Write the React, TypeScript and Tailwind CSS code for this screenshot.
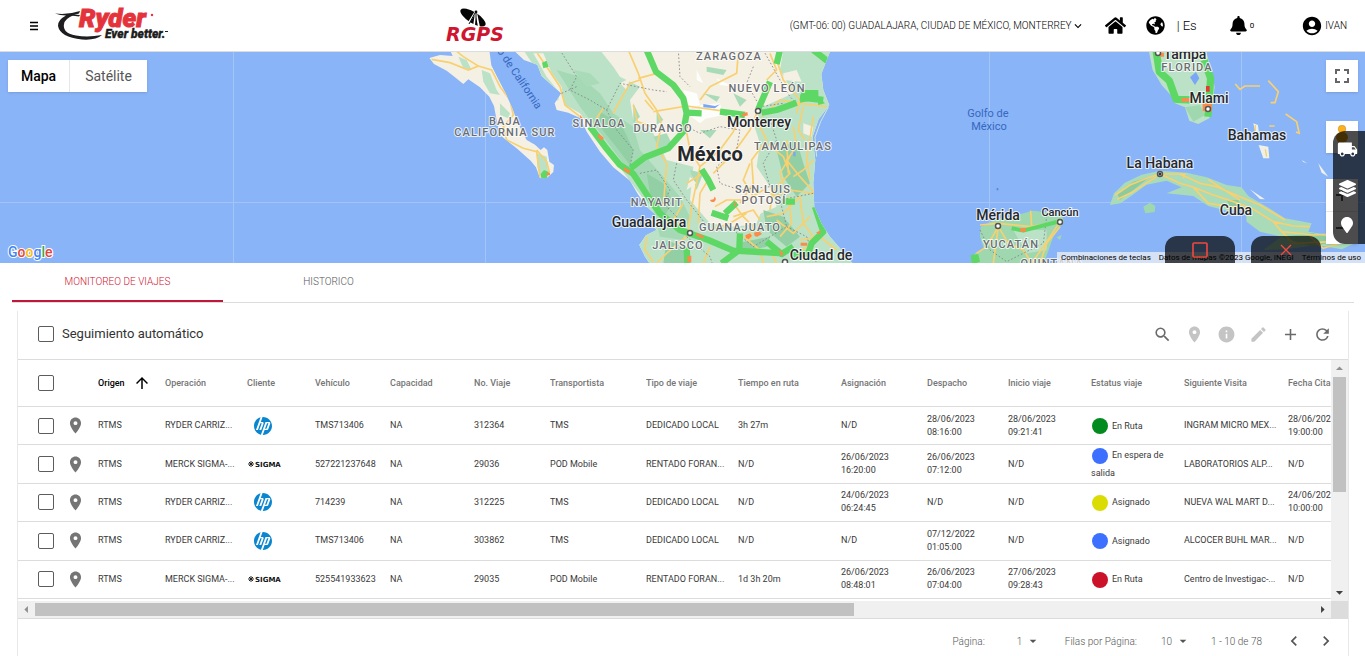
import { useState } from "react";
import { FaBell, FaGlobeAmericas, FaHome, FaLayerGroup, FaMapMarker } from "react-icons/fa";
import {
  MdAccountCircle,
  MdAdd,
  MdArrowDropDown,
  MdArrowUpward,
  MdChevronLeft,
  MdChevronRight,
  MdEdit,
  MdFullscreen,
  MdInfo,
  MdKeyboardArrowDown,
  MdLocalShipping,
  MdPlace,
  MdRefresh,
  MdSearch,
} from "react-icons/md";
import { SiHp } from "react-icons/si";

type Trip = {
  id: number;
  operation: string;
  client: "hp" | "sigma";
  vehicle: string;
  trip: string;
  carrier: string;
  kind: string;
  time: string;
  assigned: string;
  dispatched: string;
  started: string;
  status: string;
  dot: string;
  next: string;
  due: string;
};

const TRIPS: Trip[] = [
  {
    id: 1,
    operation: "RYDER CARRIZ...",
    client: "hp",
    vehicle: "TMS713406",
    trip: "312364",
    carrier: "TMS",
    kind: "DEDICADO LOCAL",
    time: "3h 27m",
    assigned: "N/D",
    dispatched: "28/06/2023 08:16:00",
    started: "28/06/2023 09:21:41",
    status: "En Ruta",
    dot: "bg-[#048b1f]",
    next: "INGRAM MICRO MEX...",
    due: "28/06/2023 19:00:00",
  },
  {
    id: 2,
    operation: "MERCK SIGMA-...",
    client: "sigma",
    vehicle: "527221237648",
    trip: "29036",
    carrier: "POD Mobile",
    kind: "RENTADO FORAN...",
    time: "N/D",
    assigned: "26/06/2023 16:20:00",
    dispatched: "26/06/2023 07:12:00",
    started: "N/D",
    status: "En espera de salida",
    dot: "bg-[#3d70ff]",
    next: "LABORATORIOS ALP...",
    due: "N/D",
  },
  {
    id: 3,
    operation: "RYDER CARRIZ...",
    client: "hp",
    vehicle: "714239",
    trip: "312225",
    carrier: "TMS",
    kind: "DEDICADO LOCAL",
    time: "N/D",
    assigned: "24/06/2023 06:24:45",
    dispatched: "N/D",
    started: "N/D",
    status: "Asignado",
    dot: "bg-[#dbdc04]",
    next: "NUEVA WAL MART D...",
    due: "24/06/2023 10:00:00",
  },
  {
    id: 4,
    operation: "RYDER CARRIZ...",
    client: "hp",
    vehicle: "TMS713406",
    trip: "303862",
    carrier: "TMS",
    kind: "DEDICADO LOCAL",
    time: "N/D",
    assigned: "N/D",
    dispatched: "07/12/2022 01:05:00",
    started: "N/D",
    status: "Asignado",
    dot: "bg-[#3d70ff]",
    next: "ALCOCER BUHL MAR...",
    due: "N/D",
  },
  {
    id: 5,
    operation: "MERCK SIGMA-...",
    client: "sigma",
    vehicle: "525541933623",
    trip: "29035",
    carrier: "POD Mobile",
    kind: "RENTADO FORAN...",
    time: "1d 3h 20m",
    assigned: "26/06/2023 08:48:01",
    dispatched: "26/06/2023 07:04:00",
    started: "27/06/2023 09:28:43",
    status: "En Ruta",
    dot: "bg-[#cc1229]",
    next: "Centro de Investigac-...",
    due: "N/D",
  },
];

const COLUMNS = [
  { label: "Operación", width: "w-[82px]" },
  { label: "Cliente", width: "w-[68px]" },
  { label: "Vehículo", width: "w-[75px]" },
  { label: "Capacidad", width: "w-[84px]" },
  { label: "No. Viaje", width: "w-[76px]" },
  { label: "Transportista", width: "w-[96px]" },
  { label: "Tipo de viaje", width: "w-[92px]" },
  { label: "Tiempo en ruta", width: "w-[103px]" },
  { label: "Asignación", width: "w-[86px]" },
  { label: "Despacho", width: "w-[81px]" },
  { label: "Inicio viaje", width: "w-[83px]" },
  { label: "Estatus viaje", width: "w-[93px]" },
  { label: "Siguiente Visita", width: "w-[104px]" },
  { label: "Fecha Cita", width: "w-[80px]" },
];

const REGIONS: [string, number, number][] = [
  ["ZARAGOZA", 729, 60],
  ["NUEVO LEÓN", 767, 92],
  ["SINALOA", 599, 127],
  ["DURANGO", 663, 132],
  ["TAMAULIPAS", 793, 150],
  ["BAJA", 505, 125],
  ["CALIFORNIA SUR", 505, 136],
  ["SAN LUIS", 763, 193],
  ["POTOSÍ", 764, 204],
  ["NAYARIT", 657, 206],
  ["GUANAJUATO", 740, 231],
  ["JALISCO", 678, 249],
  ["FLORIDA", 1187, 71],
  ["YUCATÁN", 1011, 248],
  ["QUINTANA", 1052, 267],
];

const CITIES: [string, number, number][] = [
  ["Monterrey", 759, 127],
  ["Guadalajara", 649, 227],
  ["Ciudad de", 821, 260],
  ["Tampa", 1185, 59],
  ["Miami", 1209, 103],
  ["Bahamas", 1257, 140],
  ["La Habana", 1160, 168],
  ["Cuba", 1236, 215],
  ["Mérida", 998, 220],
];

const MARKERS: [number, number][] = [
  [758, 111],
  [690, 233],
  [785, 262],
  [1158, 53],
  [1208, 109],
  [1160, 174],
  [998, 226],
  [1060, 222],
];

function RyderLogo() {
  return (
    <svg width="116" height="34" viewBox="0 0 116 34" className="overflow-visible" role="img" aria-label="Ryder Ever better.">
      <path
        d="M0 4.500 Q13 6 25 2 L24 4.500 Q13 7 9.500 13 Q6 24 21 26.500 Q33 28.500 47 26 Q41 31.500 27 30.500 Q5 28 3 17 Q2.500 11 11 6.500 Q5 6.500 0 4.500Z"
        fill="#1e1e20"
      />
      <path d="M9 5 L25 6 L24 7.500 Q16 6.500 9 5Z" fill="#1e1e20" />
      <g fontFamily="Roboto, 'Liberation Sans', sans-serif" fontStyle="italic">
        <text x="24" y="18" fontSize="26" fontWeight="900" fill="#e5333b" stroke="#e5333b" strokeWidth=".9">
          Ryder
        </text>
        <text x="50" y="29" fontSize="12" fontWeight="900" fill="#1e1e20" stroke="#1e1e20" strokeWidth=".3">
          Ever better.
        </text>
      </g>
      <circle cx="97" cy="6" r="1.2" fill="#e5333b" />
      <path d="M110 22.500h3" stroke="#1e1e20" />
    </svg>
  );
}

function RgpsLogo() {
  return (
    <svg width="60" height="36" viewBox="0 0 60 36" className="overflow-visible" role="img" aria-label="RGPS">
      <ellipse cx="28" cy="9.500" rx="14.500" ry="5.500" transform="rotate(32 28 9.500)" fill="#050505" />
      <path d="M31 3L21 19M31 4L29 18M31 4L34 19" stroke="#fff" strokeWidth="1.8" />
      <path d="M30 5L24 16M31 5L31 16" stroke="#050505" strokeWidth="1" />
      <circle cx="31" cy="4" r="1.4" fill="#050505" />
      <text x="1" y="33" fontSize="19" fontWeight="700" fontStyle="italic" fontFamily="'DejaVu Sans', sans-serif" fill="#cf1630">
        RGPS
      </text>
    </svg>
  );
}

function SigmaLogo() {
  return (
    <svg width="33" height="8" viewBox="0 0 33 8" className="overflow-visible" role="img" aria-label="Sigma">
      <path d="M1 4h6M4 1v6M2 2l4 4M6 2l-4 4" stroke="#222" strokeWidth="1" />
      <text x="8" y="7" fontSize="7" fontWeight="700" fontFamily="'DejaVu Sans', sans-serif" fill="#111">
        SIGMA
      </text>
    </svg>
  );
}

function GulfMap() {
  return (
    <svg
      viewBox="0 52 1365 211"
      preserveAspectRatio="xMidYMid slice"
      className="block h-[211px] w-full bg-[#8ab4f8]"
      fontFamily="Roboto, 'Liberation Sans', sans-serif"
    >
      <g stroke="#a3c3f9" fill="none">
        <path d="M233.5 52v211M485.5 52v211M989.5 52v211M1241.5 52v211M0 202.5h1365" />
      </g>

      {/* Mexico and Baja California, drawn at three units per pixel */}
      <g transform="translate(400 50) scale(.3333)">
        <clipPath id="mainland">
          <path d="M340 0 L372 30 L412 44 L425 78 L455 105 L484 130 L464 160 L470 180 L505 188 L542 205 L560 245 L600 305 L640 352 L690 392 L712 430 L738 468 L768 495 L745 512 L770 540 L738 556 L718 585 L735 620 L752 645 L1362 645 L1325 600 L1290 560 L1264 520 L1243 470 L1240 400 L1246 330 L1238 260 L1256 208 L1288 166 L1270 120 L1264 72 L1292 0Z" />
        </clipPath>
        <g clipPath="url(#mainland)">
          <path d="M330 0H1400V650H330Z" fill="#f4f0e4" />
          <path d="M370 0 L600 0 L640 50 L660 80 L720 110 L690 150 L700 210 L760 250 L800 330 L880 350 L870 450 L930 520 L1000 530 L1060 500 L1130 470 L1110 410 L1070 350 L1080 280 L1060 220 L1090 170 L1180 130 L1140 60 L1150 0 L1300 0 L1300 280 L1250 330 L1260 480 L1380 650 L700 650 L740 460 L620 300 L540 190 L470 150Z" fill="#bbe2c6" />
          <path d="M470 60 L540 80 L600 130 L640 190 L700 230 L720 300 L790 380 L840 440 L870 500 L850 570 L780 560 L760 480 L700 380 L610 260 L540 170Z" fill="#a5d9b5" />
          <path d="M600 185 L665 225 L700 300 L690 345 L640 280 L600 230Z M740 370 L790 400 L820 460 L790 500 L750 430Z M1130 300 L1190 270 L1210 340 L1230 400 L1190 440 L1150 380Z M1090 480 L1150 500 L1200 560 L1160 590 L1100 540Z M800 570 L850 590 L860 640 L790 640Z M1010 580 L1110 560 L1100 590 L1030 605Z" fill="#93cfa5" />
          <path d="M520 60 L560 110 L600 100 L570 70Z M760 260 L800 250 L820 290 L780 300Z M870 360 L910 370 L890 420Z M1000 130 L1040 150 L1020 170Z M920 50 L980 60 L970 75 L920 65Z M910 130 L960 140 L950 155Z M900 240 L950 240 L930 265Z M700 160 L720 200 L700 220Z M770 180 L790 210 L770 225Z" fill="#a9dbb9" />
          <path d="M1150 70 L1190 60 L1205 95 L1150 90Z M1210 220 L1240 230 L1235 260 L1210 250Z M660 100 L690 85 L680 120Z M1040 480 L1090 470 L1070 520 L1010 530 L980 500Z M870 380 L890 400 L860 420Z M400 10 L430 10 L455 70 L485 110 L495 180 L470 170 L480 130 L440 80Z" fill="#f4f0e4" />
          <path d="M850 120 L890 130 L900 165 L870 175Z M900 165 L960 160 L970 195 L900 210Z M890 60 L910 100 L890 90Z M950 85 L1000 110 L960 105Z M860 190 L930 195 L900 220Z" fill="#fdfdfb" />

          <g fill="none" stroke="#f8d070" strokeWidth="5" strokeLinejoin="round">
            <path d="M412 10 L440 50 L480 110 L495 165 L540 200" />
            <path d="M685 0 L715 70 L735 130 L770 180 L785 225 L770 290 L800 340 L790 470" />
            <path d="M720 90 L690 100 L650 170 L640 190 M715 85 L770 70 M760 185 L860 168 L1020 190 M700 165 L712 215 L755 230" />
            <path d="M855 220 L870 300 L900 350 L875 470 L865 540 M900 350 L960 300 L1000 245 L1020 195 M910 370 L860 400 M930 380 L900 430 L895 520 M940 370 L1000 310 L1050 240 L1070 190" />
            <path d="M1015 10 L1010 70 L930 110 L900 150 M1130 30 L1150 90 L1200 150 L1190 190 M1100 90 L1130 60 L1110 10 M1085 200 L1140 150 L1200 160 L1280 170" />
            <path d="M1070 210 L1100 270 L1055 330 L1060 400 L1020 460 M1050 340 L1030 390 L1060 440 M1180 230 L1190 290 L1160 330 L1200 380 L1245 430" />
            <path d="M1210 170 L1195 240 L1215 270 M1240 200 L1220 330 L1230 390 M1100 280 L1150 320 L1170 370 L1120 420 L1110 480 M1170 320 L1140 370 L1150 400 M1180 380 L1210 360 L1240 330 M1160 270 L1165 370" />
            <path d="M945 470 L980 450 L1040 450 L1090 420 L1130 440 M1000 460 L1030 500 L1060 530 L1050 570 M1120 440 L1170 420 L1240 430 M1100 500 L1150 490 L1200 440 L1210 520 L1240 560 M1130 510 L1180 550 L1230 500 M1165 440 L1175 520 L1140 560" />
            <path d="M870 550 L820 510 L850 460 M870 550 L800 610 L770 640 M740 560 L735 600 L760 635 M930 540 L990 520 L1040 490 M930 590 L910 640 M1030 560 L1080 600 L1090 640 M1200 570 L1260 560 L1310 600 M1110 600 L1130 640 M1220 590 L1180 620 M735 150 L760 180 M1000 500 L1060 480 L1080 510 M610 175 L590 205" />
          </g>

          <g fill="none" stroke="#827f85" strokeWidth="2.5" strokeDasharray="5 6">
            <path d="M480 0 L530 80 L510 120 L570 150 L620 180 L650 240 L700 300 L690 350" />
            <path d="M485 130 L530 110 M620 180 L660 100 L760 120 L800 125 M835 0 L840 80 L870 110" />
            <path d="M860 230 L900 250 L960 230 L1020 240 L1010 300 L950 350 L960 400 L1020 420 L1110 410 L1090 340 L1130 270 L1110 210" />
            <path d="M1060 50 L1040 100 L1080 170 L1150 160 M1090 0 L1140 90 L1170 140 L1190 160" />
            <path d="M830 340 L820 390 L860 450 L900 500 L930 540 M720 370 L770 360 L810 420 L790 460 L840 510" />
            <path d="M860 560 L930 620 L940 650 M1000 540 L1060 590 L1160 530 L1140 450 L1240 430 M1160 530 L1220 560 L1250 640" />
          </g>

          <g fill="none" stroke="#5dd865" strokeWidth="19" strokeLinejoin="round">
            <path d="M740 0 L768 65 L820 105 L850 145 L860 190 L850 245 L805 295 L735 322 L692 355" />
            <path d="M570 230 L615 290 L660 345 L700 372 L745 440 L780 490 L840 540 L925 570 L1000 602 L1150 610" />
            <path d="M860 188 L905 190 M960 185 L1035 195 M1075 178 L1110 95 M1085 188 L1130 180 L1190 158 M1200 142 L1270 150 M1140 0 L1130 42" />
            <path d="M905 358 L925 390 L940 420 M975 490 L1010 458 M935 488 L985 505 M1020 550 L1018 600 L965 640 M1245 470 L1270 545 L1235 580 L1225 610 L1180 615 M1100 575 L1145 612 L1180 590" />
            <path d="M1240 0 L1285 35 M1145 455 L1185 455 M860 590 L862 640" />
          </g>
          <path d="M1205 120 L1255 120 L1256 148 L1200 158Z M1250 135 L1275 160 L1255 165Z M426 38 L440 32 L446 50 L430 55Z" fill="#5dd865" />
          <g fill="#fb8b4a">
            <path d="M597 252 L612 264 L604 272 L592 258Z M540 195 L549 205 L541 212Z M674 352 L692 364 L686 371 L670 360Z M890 548 L912 558 L908 566 L888 556Z M1025 192 L1042 186 L1044 196 L1028 200Z M1137 598 L1152 612 L1142 618Z M862 617h12v20h-12Z M1202 578h20v9h-20Z M930 450 a9 9 0 1 0 14-10 l-3 8Z M1036 556 l14-6 6 8-10 10-8-4Z M1062 548 l16-4 8 8-14 8-8-2Z M1000 462 L1012 455 L1004 470Z M1248 548 l14-7-2 12Z" />
          </g>
          <path d="M910 162 L945 168 L960 163 L945 175 L910 172Z M1180 305h7v14h-7Z" fill="#79a6f6" />
        </g>

        <clipPath id="baja">
          <path d="M150 0 L158 18 L120 15 L88 24 L102 42 L140 62 L165 82 L190 102 L205 88 L240 112 L268 140 L282 168 L288 200 L300 255 L350 295 L392 332 L408 352 L420 385 L440 385 L460 366 L462 345 L448 335 L442 300 L432 292 L422 300 L405 284 L380 270 L352 215 L338 178 L318 132 L292 82 L274 46 L268 0Z" />
        </clipPath>
        <g clipPath="url(#baja)">
          <path d="M80 0H470V400H80Z" fill="#f4f0e4" />
          <path d="M175 20 L200 30 L215 60 L190 55Z M245 60 L270 70 L290 120 L300 135 L270 130 L250 95Z M300 160 L330 190 L325 205 L300 195Z M410 310 L440 320 L445 375 L425 390 L412 350Z" fill="#bbe2c6" />
          <path d="M95 28 L150 38 L205 60 L235 48 L190 20 L165 0 M235 48 L275 60 L300 110 L330 150 L340 195 L310 230 L320 270 L370 295 L410 305 L420 385 M410 300 L440 335 L448 365 L430 385" fill="none" stroke="#f8d070" strokeWidth="5" />
          <path d="M422 372 L432 360 L446 366 L440 386 L425 388Z" fill="#5dd865" />
          <path d="M440 368h10v8h-10Z" fill="#fb8b4a" />
        </g>
        <path d="M1285 172 L1262 215 L1245 262 L1250 320" fill="none" stroke="#cfe8d5" strokeWidth="3" />
      </g>

      {/* Yucatán, Cuba, Florida and the Bahamas */}
      <g transform="translate(880 50) scale(.3333)" strokeLinejoin="round">
        <path d="M270 645 L285 610 L312 596 L300 560 L302 530 L350 508 L400 498 L460 482 L545 492 L552 515 L520 560 L506 600 L490 645Z" fill="#9fd8af" />
        <path d="M400 540 L500 540 L500 600 L440 610Z" fill="#bbe2c6" />
        <path d="M690 465 L702 430 L735 398 L785 374 L840 362 L920 368 L980 382 L1040 405 L1085 412 L1105 438 L1160 470 L1215 505 L1295 520 L1285 545 L1345 555 L1415 550 L1435 575 L1385 598 L1310 585 L1220 598 L1150 600 L1205 560 L1140 545 L1100 515 L1098 480 L1040 482 L985 468 L940 438 L860 430 L905 412 L860 392 L800 404 L750 440 L722 460Z" fill="#a9dbb9" />
        <path d="M712 430 L760 395 L810 380 L760 420 L720 450Z M1200 560 L1300 550 L1380 570 L1300 590Z M1040 450 L1075 450 L1085 472 L1050 470Z" fill="#8ccb9f" />
        <path d="M790 470 L810 458 L826 468 L824 486 L796 490Z M530 562 L545 555 L540 570Z" fill="#9fd8af" />
        <path d="M806 0 L818 60 L845 105 L872 135 L885 160 L915 172 L928 212 L955 222 L988 205 L998 160 L1004 110 L998 80 L978 0Z" fill="#bbe2c6" />
        <path d="M915 172 L960 165 L975 195 L940 215Z" fill="#9fd8af" />
        <path d="M930 82 L948 66 L958 85 L945 105Z" fill="#79a6f6" />

        <g fill="none" stroke="#f8d070" strokeWidth="5">
          <path d="M300 525 L355 520 L450 530 L540 515 L490 590 L455 640 M355 530 L320 590 L290 610 M355 530 L385 580 L430 600 L455 640 M452 482 L455 530 M355 530 L340 640 M540 530 L500 580 L480 640" />
          <path d="M706 435 L750 405 L800 385 L840 372 L900 400 L940 412 L1000 435 L1060 455 L1120 478 L1180 515 L1240 528 L1290 530 M712 448 L760 425 L830 380 M900 372 L960 400 L1010 410 L1080 440 L1140 465 L1215 510 M840 372 L915 372 L910 385 M940 412 L985 460 L1050 470 L1110 478 M985 388 L1040 425 L1080 450 M1180 515 L1205 545 L1300 555 L1400 550 M1205 545 L1240 580 L1360 575 M1290 560 L1330 595 L1380 580" />
          <path d="M1066 102 L1080 118 L1095 108 L1140 108 M1165 92 L1195 125 L1185 158 L1172 158 M1217 192 L1250 215 L1258 250 L1248 246 M1168 228h16" />
        </g>
        <path d="M1120 220 L1134 225 L1138 258 L1126 245Z M1136 285 L1165 290 L1168 325 L1150 325Z M1265 330 L1282 340 L1270 336Z M1315 340 L1345 380 L1325 368Z M1110 418 L1155 448 L1140 447Z" fill="#edf1e8" />
        <path d="M1126 225v20M1156 298 L1160 320" stroke="#f8d070" strokeWidth="4" />
        <path d="M300 540 L330 600 L380 635 L490 580 L500 500" fill="none" stroke="#827f85" strokeWidth="2.5" strokeDasharray="5 6" />

        <g fill="none" stroke="#5dd865" strokeWidth="22">
          <path d="M828 0 L838 65 L868 92 L888 148 L940 150" />
          <path d="M972 30 L992 85 L984 200" />
        </g>
        <path d="M395 535 L430 542 L530 516" fill="none" stroke="#5dd865" strokeWidth="12" />
        <path d="M272 615 L295 612 L300 635 L275 645Z" fill="#5dd865" />
        <path d="M905 144h30v11h-30Z M968 160h28v24h-28Z M420 535h18v10h-18Z M840 8h12v12h-12Z" fill="#fb8b4a" />
        <path d="M978 108h11v17h-11Z" fill="#e53935" />
        <path d="M350 414h5v7h-5Z" fill="#5d87cf" />
      </g>

      <g fill="#fff" stroke="#555" strokeWidth="1.5">
        {MARKERS.map(([x, y]) => (
          <circle key={`${x}-${y}`} cx={x} cy={y} r="2.5" />
        ))}
      </g>
      <circle cx="1160" cy="174" r="1.5" fill="#333" />

      <g textAnchor="middle" paintOrder="stroke" stroke="#fff" strokeWidth="2" strokeLinejoin="round" strokeOpacity=".8">
        <g fontSize="11" fontWeight="500" fill="#6a6d70" className="tracking-widest">
          {REGIONS.map(([name, x, y]) => (
            <text key={name} x={x} y={y}>
              {name}
            </text>
          ))}
        </g>
        <g fontSize="14" fontWeight="500" fill="#26282c">
          {CITIES.map(([name, x, y]) => (
            <text key={name} x={x} y={y}>
              {name}
            </text>
          ))}
          <text x="1060" y="216" fontSize="11">Cancún</text>
          <text x="710" y="161" fontSize="20" fontWeight="700">México</text>
        </g>
      </g>
      <g textAnchor="middle" fontSize="11" fill="#3568be">
        <text x="988" y="117">Golfo de</text>
        <text x="989" y="130">México</text>
        <text transform="translate(511 72) rotate(56)">Golfo de California</text>
      </g>
      <text x="8" y="257" fontSize="14" fontWeight="500" paintOrder="stroke" stroke="#fff" strokeWidth="2">
        <tspan fill="#4285f4">G</tspan>
        <tspan fill="#ea4335">o</tspan>
        <tspan fill="#fbbc05">o</tspan>
        <tspan fill="#4285f4">g</tspan>
        <tspan fill="#34a853">l</tspan>
        <tspan fill="#ea4335">e</tspan>
      </text>
    </svg>
  );
}

function MapPanel() {
  return (
    <section className="relative overflow-hidden" aria-label="Mapa">
      <GulfMap />

      <div className="absolute top-2 left-2 flex h-8 bg-white text-sm shadow">
        <button type="button" className="w-[62px] border-r border-[#e6e6e6] font-medium text-black">
          Mapa
        </button>
        <button type="button" className="w-[77px] text-[#565656]">
          Satélite
        </button>
      </div>

      <button type="button" aria-label="Pantalla completa" className="absolute top-2 right-[7px] flex size-8 items-center justify-center bg-white text-[#666] shadow">
        <MdFullscreen size={24} />
      </button>
      <button type="button" aria-label="Street View" className="absolute top-[69px] right-[7px] flex size-8 justify-center bg-white pt-1 shadow">
        <svg width="14" height="24" viewBox="0 0 14 24">
          <path d="M1 13q0-6 6-6t6 6l-2 4H9v6H5v-6H3Z" fill="#e09a10" />
          <circle cx="7" cy="4" r="3.8" fill="#fbb117" stroke="#b9852a" strokeWidth=".5" />
        </svg>
      </button>
      <div className="absolute top-[127px] right-[7px] flex h-[65px] w-8 flex-col bg-white shadow">
        <button type="button" aria-label="Acercar" className="flex flex-1 items-center justify-center border-b border-[#e6e6e6]">
          <svg width="12" height="12" viewBox="0 0 12 12" stroke="#555" strokeWidth="2">
            <path d="M0 6h12M6 0v12" />
          </svg>
        </button>
        <button type="button" aria-label="Alejar" className="flex flex-1 items-center justify-center">
          <svg width="12" height="12" viewBox="0 0 12 12" stroke="#555" strokeWidth="2">
            <path d="M0 6h12" />
          </svg>
        </button>
      </div>

      <div className="absolute right-0 bottom-0 flex h-[11px] items-center gap-2 bg-[#f5f5f5]/70 px-1 text-[8px] leading-none whitespace-nowrap text-black">
        <button type="button">Combinaciones de teclas</button>
        <span>Datos de mapas ©2023 Google, INEGI</span>
        <a href="#terminos">Términos de uso</a>
      </div>

      <div className="absolute right-0 bottom-[19px] flex h-[113px] w-8 flex-col items-center gap-5 rounded-l-xl bg-black/70 pt-2 pr-1 text-white">
        <button type="button" aria-label="Vehículos"><MdLocalShipping size={21} /></button>
        <button type="button" aria-label="Capas"><FaLayerGroup size={17} /></button>
        <button type="button" aria-label="Ubicaciones"><FaMapMarker size={16} /></button>
      </div>

      <div className="absolute right-11 bottom-0 flex gap-4">
        <button type="button" aria-label="Maximizar" className="flex h-[27px] w-[70px] items-center justify-center rounded-t-xl bg-black/70">
          <svg width="16" height="16" viewBox="0 0 16 16" fill="none" stroke="#f04a3c" strokeWidth="1.6">
            <rect x="1" y="1" width="14" height="14" rx="1" />
          </svg>
        </button>
        <button type="button" aria-label="Cerrar" className="flex h-[27px] w-[70px] items-center justify-center rounded-t-xl bg-black/70">
          <svg width="12" height="12" viewBox="0 0 12 12" stroke="#f04a3c" strokeWidth="1.4">
            <path d="M1 1l10 10M11 1L1 11" />
          </svg>
        </button>
      </div>
    </section>
  );
}

function Header() {
  return (
    <header className="flex h-[52px] items-center border-b border-[#dcdcdc] pr-[18px] pl-[29px] text-black">
      <button type="button" aria-label="Menú" className="mr-4">
        <svg width="10" height="10" viewBox="0 0 10 10" stroke="#000" strokeWidth="1.4">
          <path d="M1 1.5h8M1 5h8M1 8.5h8" />
        </svg>
      </button>
      <RyderLogo />
      <div className="ml-[274px]">
        <RgpsLogo />
      </div>

      <div className="ml-auto flex items-center">
        <div className="flex items-center">
          <select aria-label="Zona horaria" className="appearance-none bg-transparent text-[10px] font-light outline-none">
            <option>(GMT-06: 00) GUADALAJARA, CIUDAD DE MÉXICO, MONTERREY</option>
          </select>
          <MdKeyboardArrowDown size={14} className="-ml-px" />
        </div>
        <a href="#inicio" aria-label="Inicio" className="ml-5"><FaHome size={21} /></a>
        <button type="button" aria-label="Idioma" className="ml-5 flex items-center">
          <FaGlobeAmericas size={19} />
          <span className="ml-3 text-[13px] font-light">| Es</span>
        </button>
        <button type="button" aria-label="Notificaciones" className="ml-8 flex items-center">
          <FaBell size={19} />
          <span className="ml-0.5 text-[8px]">0</span>
        </button>
        <button type="button" className="ml-[47px] flex items-center gap-0.5 text-[10px] font-light">
          <MdAccountCircle size={22} />
          IVAN
        </button>
      </div>
    </header>
  );
}

function Checkbox({ label }: { label: string }) {
  return (
    <input
      type="checkbox"
      aria-label={label}
      className="block size-4 shrink-0 appearance-none rounded-[2px] border border-[#5c5c5c] bg-white checked:bg-[#cf1630]"
    />
  );
}

function TripRow({ trip }: { trip: Trip }) {
  return (
    <tr className="h-[38px] *:border-b *:border-[#dcdcdc] *:p-0">
      <td><div className="pl-5"><Checkbox label={`Seleccionar viaje ${trip.trip}`} /></div></td>
      <td><MdPlace size={19} className="-ml-1 text-[#757575]" /></td>
      <td>RTMS</td>
      <td>{trip.operation}</td>
      <td>
        {trip.client === "hp" ? (
          <SiHp size={18} className="ml-[7px] text-[#0a86d1]" title="HP" />
        ) : (
          <SigmaLogo />
        )}
      </td>
      <td>{trip.vehicle}</td>
      <td>NA</td>
      <td>{trip.trip}</td>
      <td>{trip.carrier}</td>
      <td>{trip.kind}</td>
      <td>{trip.time}</td>
      <td><div className="w-[60px]">{trip.assigned}</div></td>
      <td><div className="w-[60px]">{trip.dispatched}</div></td>
      <td><div className="w-[60px]">{trip.started}</div></td>
      <td>
        <div className="leading-[18px]">
          <span className={`mr-1 ml-px inline-block size-4 rounded-full align-middle ${trip.dot}`} />
          {trip.status}
        </div>
      </td>
      <td>{trip.next}</td>
      <td><div className="w-[60px]">{trip.due}</div></td>
    </tr>
  );
}

function TripTable() {
  return (
    <div className="border-b border-[#dcdcdc]">
      <div className="flex">
        <div className="h-[241px] min-w-0 flex-1 overflow-hidden">
          <table className="h-[239px] w-[1350px] min-w-full table-fixed border-separate border-spacing-0 text-left text-[9px] leading-[13px] text-[#3a3a3a]">
            <thead>
              <tr className="h-[47px] *:border-b *:border-[#dcdcdc] *:p-0 *:font-medium">
                <th className="w-[52px]"><div className="pl-5"><Checkbox label="Seleccionar todos" /></div></th>
                <th className="w-[28px]" aria-label="Ubicación" />
                <th className="w-[67px]" aria-sort="ascending">
                  <button type="button" className="flex items-center gap-2 text-black">
                    Origen <MdArrowUpward size={18} />
                  </button>
                </th>
                {COLUMNS.map((column) => (
                  <th key={column.label} className={`${column.width} text-[#757575]`}>
                    {column.label}
                  </th>
                ))}
              </tr>
            </thead>
            <tbody>
              {TRIPS.map((trip) => (
                <TripRow key={trip.id} trip={trip} />
              ))}
            </tbody>
          </table>
        </div>
        <div className="flex w-[17px] flex-col items-center justify-between bg-[#f0f0f0]">
          <div className="flex flex-col items-center">
            <MdArrowDropDown size={17} className="rotate-180 text-[#909090]" />
            <div className="h-[115px] w-[13px] bg-[#c1c1c1]" />
          </div>
          <MdArrowDropDown size={17} className="text-[#404040]" />
        </div>
      </div>
      <div className="flex h-[17px] items-center bg-[#f0f0f0]">
        <MdArrowDropDown size={17} className="rotate-90 text-[#909090]" />
        <div className="min-w-0 flex-1">
          <div className="h-[13px] w-[64%] bg-[#c1c1c1]" />
        </div>
        <MdArrowDropDown size={17} className="-rotate-90 text-[#404040]" />
        <div className="size-[17px] bg-[#dcdcdc]" />
      </div>
    </div>
  );
}

export default function App() {
  const [tab, setTab] = useState(0);

  return (
    <div className="h-screen overflow-hidden bg-white font-[Roboto,'Liberation_Sans',sans-serif]">
      <Header />
      <MapPanel />

      <nav className="mr-[11px] ml-3 flex h-10 border-b border-[#dcdcdc] text-[10px] font-light">
        {["MONITOREO DE VIAJES", "HISTORICO"].map((name, i) => (
          <button
            key={name}
            type="button"
            onClick={() => setTab(i)}
            className={
              tab === i
                ? "w-[211px] border-b-2 border-b-[#c0183a] text-[#cf1630]"
                : "w-[211px] border-b-2 border-b-transparent text-[#555]"
            }
          >
            {name}
          </button>
        ))}
      </nav>

      <main className="mt-2 mr-4 ml-[17px] border-x border-[#e8e8e8]">
        <div className="flex h-[49px] items-center justify-between border-b border-[#dcdcdc] pr-4 pb-0.5 pl-5">
          <label className="flex items-center gap-2 text-[13px] text-[#333]">
            <Checkbox label="Seguimiento automático" />
            Seguimiento automático
          </label>
          <div className="flex gap-[13px] text-[#6a6a6a]">
            <button type="button" aria-label="Buscar"><MdSearch size={19} /></button>
            <button type="button" aria-label="Ubicar" disabled className="text-[#c4c4c4]"><MdPlace size={19} /></button>
            <button type="button" aria-label="Detalle" disabled className="text-[#c4c4c4]"><MdInfo size={19} /></button>
            <button type="button" aria-label="Editar" disabled className="text-[#c4c4c4]"><MdEdit size={19} /></button>
            <button type="button" aria-label="Agregar"><MdAdd size={19} /></button>
            <button type="button" aria-label="Actualizar"><MdRefresh size={19} /></button>
          </div>
        </div>

        <TripTable />

        <footer className="flex h-11 items-center justify-end pr-3 text-[10px] font-light text-[#555]">
          <label htmlFor="page">Página:</label>
          <div className="ml-8 flex items-center">
            <select id="page" className="appearance-none bg-transparent outline-none">
              <option>1</option>
            </select>
            <MdArrowDropDown size={16} className="ml-0.5" />
          </div>
          <label htmlFor="rows" className="ml-6">Filas por Página:</label>
          <div className="ml-6 flex items-center">
            <select id="rows" className="appearance-none bg-transparent outline-none">
              <option>10</option>
            </select>
            <MdArrowDropDown size={16} className="ml-0.5" />
          </div>
          <span className="ml-5">1 - 10 de 78</span>
          <button type="button" aria-label="Página anterior" className="ml-[22px]"><MdChevronLeft size={20} /></button>
          <button type="button" aria-label="Página siguiente" className="ml-3 text-[#555]"><MdChevronRight size={20} /></button>
        </footer>
      </main>
    </div>
  );
}
